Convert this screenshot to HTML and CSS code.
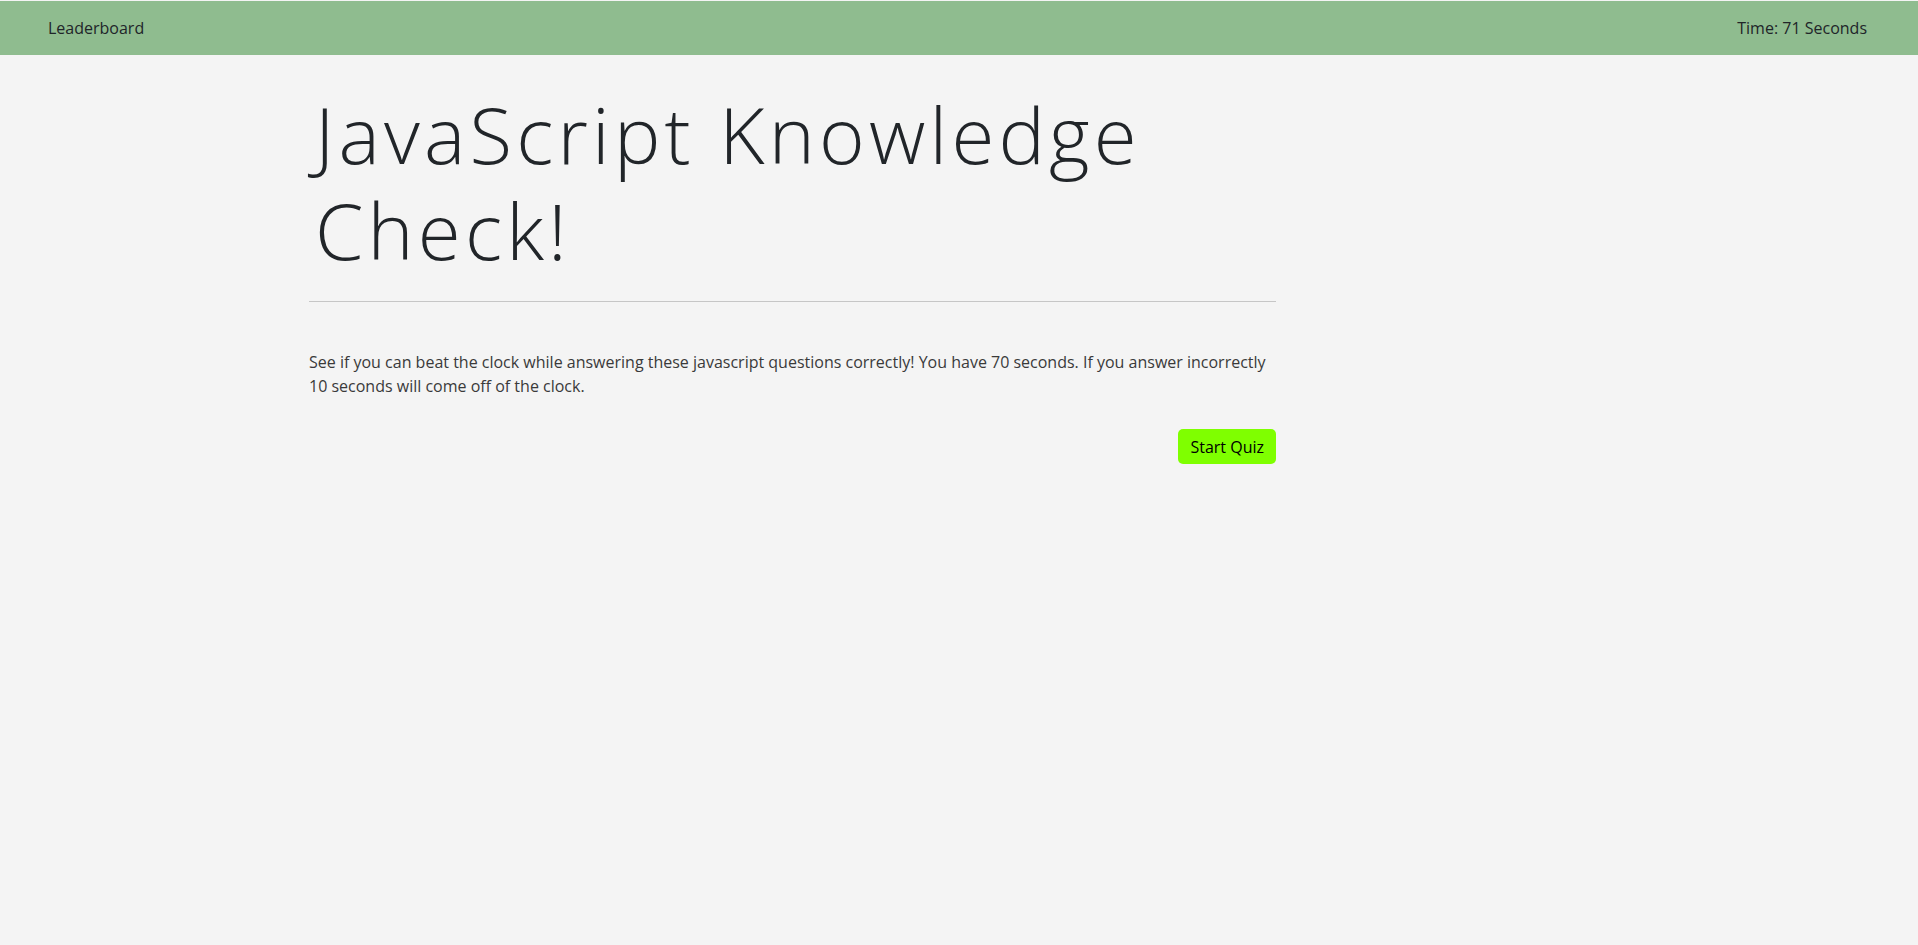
FILE: index.html
```html
<!DOCTYPE html>
<html lang="en">
<head>
<meta charset="utf-8">
<title>JavaScript Knowledge Check</title>
<link rel="stylesheet" href="styles.css">
</head>
<body>
<nav class="navbar">
  <a class="nav-link" href="#">Leaderboard</a>
  <span class="timer">Time: 71 Seconds</span>
</nav>
<main class="main">
  <h1 class="title">JavaScript Knowledge Check!</h1>
  <hr class="divider">
  <p class="intro">See if you can beat the clock while answering these javascript questions correctly! You have 70 seconds. If you answer incorrectly 10 seconds will come off of the clock.</p>
  <div class="actions">
    <button class="start-btn" type="button">Start Quiz</button>
  </div>
</main>
</body>
</html>
```
FILE: styles.css
```css
* { box-sizing: border-box; }
html, body { margin: 0; padding: 0; }
body {
  background: #f4f4f4;
  font-family: "Open Sans", "Lato", sans-serif;
  color: #212529;
  font-size: 16px;
  line-height: 1.5;
}
.navbar {
  height: 54px;
  margin-top: 1px;
  background: #8fbc8f;
  display: flex;
  align-items: center;
  justify-content: space-between;
  padding: 0 51px 0 48px;
  font-size: 16px;
}
.nav-link { color: #212529; text-decoration: none; }
.timer { color: #212529; }
.main {
  width: 967px;
  margin-left: 309px;
  padding-top: 31px;
}
.title {
  margin: 0;
  font-size: 78px;
  font-weight: 300;
  line-height: 96px;
  letter-spacing: 4.2px;
  padding-left: 6px;
  max-width: 900px;
}
.divider {
  margin: 23px 0 0;
  border: 0;
  border-top: 1px solid #c6c6c6;
}
.intro {
  margin: 48px 0 0;
  font-size: 16px;
  line-height: 24px;
  color: #3a3a3a;
}
.actions {
  display: flex;
  justify-content: flex-end;
  margin-top: 31px;
}
.start-btn {
  background: #7fff00;
  border: 0;
  border-radius: 5px;
  height: 35px;
  padding: 0 12px;
  font-family: inherit;
  font-size: 16px;
  color: #000;
}
```
